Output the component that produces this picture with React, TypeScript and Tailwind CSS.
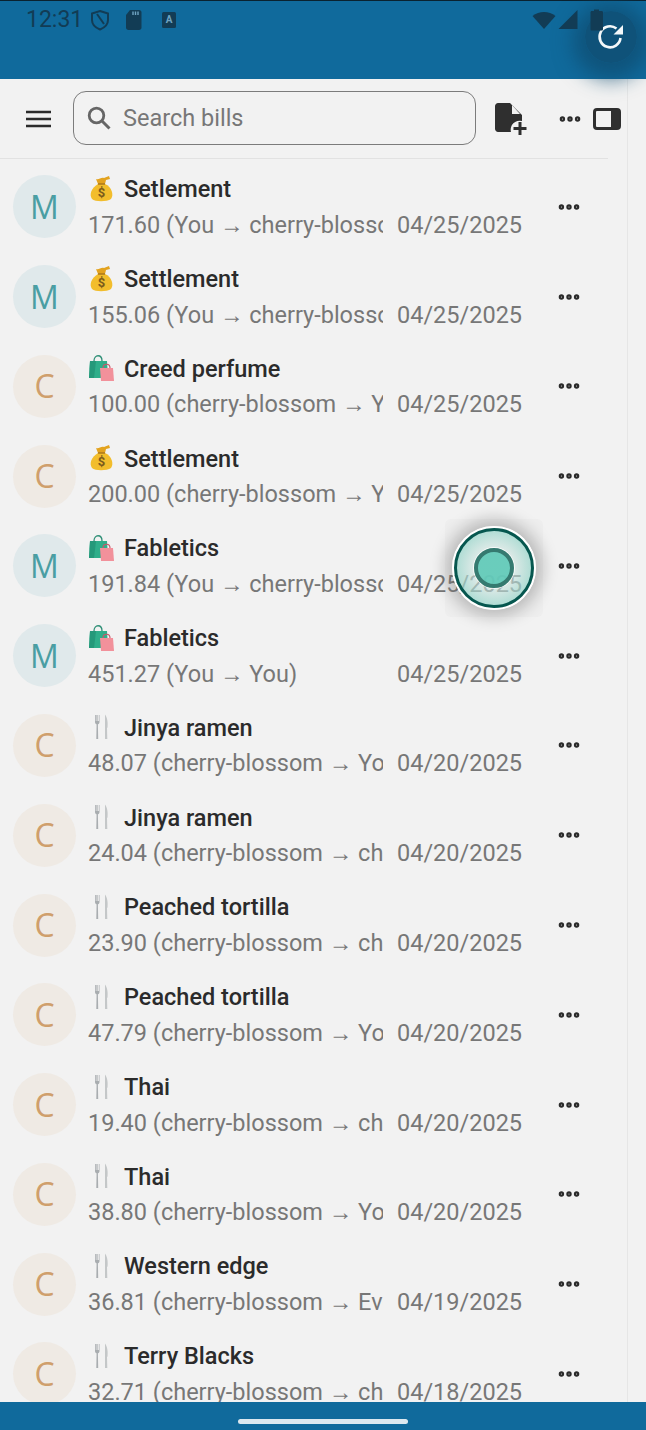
import { Ellipsis } from "lucide-react";

type Bill = { kind: "money" | "bag" | "food"; who: "M" | "C"; title: string; sub: string; date: string };

const bills: Bill[] = [
  { kind: "money", who: "M", title: "Setlement", sub: "171.60 (You → cherry-blossom)", date: "04/25/2025" },
  { kind: "money", who: "M", title: "Settlement", sub: "155.06 (You → cherry-blossom)", date: "04/25/2025" },
  { kind: "bag", who: "C", title: "Creed perfume", sub: "100.00 (cherry-blossom → You)", date: "04/25/2025" },
  { kind: "money", who: "C", title: "Settlement", sub: "200.00 (cherry-blossom → You)", date: "04/25/2025" },
  { kind: "bag", who: "M", title: "Fabletics", sub: "191.84 (You → cherry-blossom)", date: "04/25/2025" },
  { kind: "bag", who: "M", title: "Fabletics", sub: "451.27 (You → You)", date: "04/25/2025" },
  { kind: "food", who: "C", title: "Jinya ramen", sub: "48.07 (cherry-blossom → You)", date: "04/20/2025" },
  { kind: "food", who: "C", title: "Jinya ramen", sub: "24.04 (cherry-blossom → cherry)", date: "04/20/2025" },
  { kind: "food", who: "C", title: "Peached tortilla", sub: "23.90 (cherry-blossom → cherry)", date: "04/20/2025" },
  { kind: "food", who: "C", title: "Peached tortilla", sub: "47.79 (cherry-blossom → You)", date: "04/20/2025" },
  { kind: "food", who: "C", title: "Thai", sub: "19.40 (cherry-blossom → cherry)", date: "04/20/2025" },
  { kind: "food", who: "C", title: "Thai", sub: "38.80 (cherry-blossom → You)", date: "04/20/2025" },
  { kind: "food", who: "C", title: "Western edge", sub: "36.81 (cherry-blossom → Everyone)", date: "04/19/2025" },
  { kind: "food", who: "C", title: "Terry Blacks", sub: "32.71 (cherry-blossom → cherry)", date: "04/18/2025" },
];

const KindIcon = ({ kind }: { kind: Bill["kind"] }) => {
  if (kind === "money") {
    return (
      <svg width="28" height="28" viewBox="0 0 28 28" className="shrink-0">
        <path d="M10 9 C3 13 1 20 4 24 C7 27 19 27 23 24 C26 20 24 12 17 9 Z" fill="#f2bd2c" />
        <path d="M10 9 L8 4 C11 5 13 2 16 3 L21 1 L22 4 L18 5 L17 9 Z" fill="#e3a31f" />
        <path d="M10 9 L17 9" stroke="#a8741a" strokeWidth="1.4" />
        <text x="13.5" y="22" textAnchor="middle" fontSize="13" fontWeight="700" fill="#7a5a1c" fontFamily="Roboto, sans-serif">$</text>
      </svg>
    );
  }
  if (kind === "bag") {
    return (
      <svg width="28" height="28" viewBox="0 0 28 28" className="shrink-0">
        <path d="M6 7 C6 0 14 0 14 7" fill="none" stroke="#2f8f76" strokeWidth="1.3" />
        <path d="M2 7 H19 L20 24 H1 Z" fill="#2fae8a" />
        <path d="M2 7 H8 L6 24 H1 Z" fill="#25997a" />
        <path d="M15 14 C15 9 22 9 22 14" fill="none" stroke="#c9576b" strokeWidth="1.2" />
        <path d="M12 14 H25 L26 27 H13 Z" fill="#f2919b" />
      </svg>
    );
  }
  return (
    <svg width="28" height="28" viewBox="0 0 28 28" className="shrink-0">
      <path d="M7 2 V9 C7 10.5 8 11 8.6 11.5 L8.3 26 H10.2 L9.9 11.5 C10.5 11 11.5 10.5 11.5 9 V2 H10.9 V8 H10.1 V2 H9.4 V8 H8.6 V2 H7.8 V8 H7.6 V2 Z" fill="#a9adb0" />
      <path d="M17 1.5 C19.5 4.5 20 10 19.5 14.5 L19 15 L19.3 26 H17 Z" fill="#c4c7c8" />
    </svg>
  );
};

const Row = ({ bill }: { bill: Bill }) => (
  <div className="h-[89.77px] shrink-0 flex items-center pl-[13px]">
    <div
      className={`size-[63px] shrink-0 rounded-full flex items-center justify-center text-[32px] font-['Open_Sans',sans-serif] ${
        bill.who === "M" ? "bg-[#e0e9eb] text-[#4a9ea3]" : "bg-[#efeae4] text-[#cf9f6c]"
      }`}
    >
      {bill.who}
    </div>
    <div className="ml-[12px] w-[295px] shrink-0 overflow-hidden">
      <div className="flex items-center gap-[8px] h-[30px]">
        <KindIcon kind={bill.kind} />
        <p className="mt-[2px] text-[23.5px] font-medium text-[#2b2b2b] whitespace-nowrap">{bill.title}</p>
      </div>
      <p className="mt-[6px] text-[23.5px] leading-[30px] text-[#777777] whitespace-nowrap">{bill.sub}</p>
    </div>
    <div className="ml-[14px] w-[126px] shrink-0 pt-[36px] text-[23.5px] leading-[30px] text-[#777777] whitespace-nowrap">{bill.date}</div>
    <Ellipsis size={26} strokeWidth={3} className="ml-[33px] text-[#2b2b2b] shrink-0" />
  </div>
);

export default function App() {
  return (
    <div className="relative w-[646px] h-[1430px] overflow-hidden flex flex-col bg-[#f2f2f2] font-['Roboto',sans-serif]">
      {/* status bar */}
      <div className="h-[79px] shrink-0 bg-[#106a9c] border-t border-[#0a2230] flex items-start justify-between pl-[26px] pr-[42px] pt-[5px] text-[#123c55]">
        <div className="flex items-center">
          <span className="text-[23px] leading-[28px]">12:31</span>
          <svg width="20" height="22" viewBox="0 0 20 22" className="ml-[7px]" fill="none" stroke="currentColor" strokeWidth="2">
            <path d="M10 2 L18 4.5 V11 C18 15 15 18.5 10 20.5 C5 18.5 2 15 2 11 V4.5 Z" />
            <path d="M7 5 L14 15" />
          </svg>
          <svg width="18" height="22" viewBox="0 0 18 22" className="ml-[15px]" fill="currentColor">
            <path d="M5 1 H14 C15.5 1 16.5 2 16.5 3.5 V18.5 C16.5 20 15.5 21 14 21 H3.5 C2 21 1 20 1 18.5 V6 Z" />
            <path d="M8 2.5 V6 M10.5 2.5 V6 M13 2.5 V6" stroke="#6fa4c2" strokeWidth="1.4" />
          </svg>
          <svg width="16" height="18" viewBox="0 0 16 18" className="ml-[18px]">
            <rect x="1" y="1" width="14" height="16" rx="1.5" fill="currentColor" />
            <text x="8" y="11.5" textAnchor="middle" fontSize="10" fontWeight="700" fill="#6fa4c2" fontFamily="Roboto, sans-serif">A</text>
          </svg>
        </div>
        <div className="relative z-10 flex items-center gap-[2px] pt-[3px]">
          <svg width="24" height="20" viewBox="0 0 24 20" fill="currentColor">
            <path d="M12 19 L0.5 6 C7 0.5 17 0.5 23.5 6 Z" />
          </svg>
          <svg width="20" height="20" viewBox="0 0 20 20" fill="currentColor">
            <path d="M19.5 0 V19 H0.5 Z" />
          </svg>
          <svg width="14" height="22" viewBox="0 0 14 22" fill="currentColor" className="ml-[10px]">
            <path d="M4 2 V0.5 H9 V2 H11.5 C12.5 2 13 2.5 13 3.5 V20 C13 21 12.5 21.5 11.5 21.5 H2 C1 21.5 0.5 21 0.5 20 V3.5 C0.5 2.5 1 2 2 2 Z" />
          </svg>
        </div>
      </div>

      {/* main */}
      <div className="flex-1 min-h-0 flex overflow-hidden">
        <div className="w-[628px] shrink-0 border-r border-[#e6e6e6] flex flex-col">
          <div className="mr-[19px] h-[80px] shrink-0 border-b border-[#e2e2e2] flex items-center pl-[26px]">
            <svg width="25" height="18" viewBox="0 0 25 18" className="shrink-0">
              <path d="M0 2 H25 M0 9 H25 M0 16 H25" stroke="#2b2b2b" strokeWidth="2.6" />
            </svg>
            <div className="ml-[22px] mb-[2px] w-[403px] h-[54px] shrink-0 rounded-[13px] border border-[#7c7c7c] flex items-center pl-[13px] gap-[12px]">
              <svg width="24" height="24" viewBox="0 0 24 24" className="shrink-0">
                <circle cx="9.5" cy="9.5" r="7.3" fill="none" stroke="#666666" strokeWidth="2.8" />
                <path d="M14.5 14.5 L22.5 22.5" stroke="#666666" strokeWidth="3" />
              </svg>
              <span className="mt-[2px] text-[23.5px] text-[#777777]">Search bills</span>
            </div>
            <svg width="34" height="34" viewBox="0 0 34 34" className="ml-[18px] shrink-0">
              <path d="M4 1 H16 L28 13 V19 A9 9 0 0 0 17 30 H4 C2.5 30 1 28.5 1 27 V4 C1 2.5 2.5 1 4 1 Z" fill="#2f2f2f" />
              <path d="M18 3 L26 12 H18 Z" fill="#f2f2f2" />
              <path d="M26 20 V33 M19.5 26.5 H32.5" stroke="#2f2f2f" strokeWidth="3" />
            </svg>
            <Ellipsis size={26} strokeWidth={3} className="ml-[29px] text-[#2b2b2b] shrink-0" />
            <svg width="28" height="22" viewBox="0 0 28 22" className="ml-[10px] shrink-0">
              <rect x="1.5" y="1.5" width="25" height="19" rx="2.5" fill="none" stroke="#2f2f2f" strokeWidth="3" />
              <rect x="18" y="1.5" width="8.5" height="19" fill="#2f2f2f" />
            </svg>
          </div>
          <div className="flex-1 min-h-0 overflow-hidden flex flex-col pt-[3px]">
            {bills.map((bill, i) => (
              <Row key={i} bill={bill} />
            ))}
          </div>
        </div>
      </div>

      {/* nav bar */}
      <div className="h-[28px] shrink-0 bg-[#106a9c] flex items-center justify-center">
        <div className="w-[170px] h-[5px] mt-[10px] rounded-full bg-[#dce8ef]" />
      </div>

      {/* floating refresh button */}
      <div className="absolute right-[9px] top-[11px] size-[52px] rounded-full flex items-center justify-center bg-[#0f4c70]/80 shadow-[0_4px_20px_12px_rgba(15,76,112,0.75)]">
        <svg width="28" height="28" viewBox="0 0 28 28" fill="none">
          <path d="M23.5 15 A10.5 10.5 0 1 1 19.5 5.5" stroke="#f4f8fa" strokeWidth="2.6" />
          <path d="M26 2 V11.5 H16.5 Z" fill="#f4f8fa" />
        </svg>
      </div>

      {/* floating record bubble */}
      <div className="absolute left-[445px] top-[519px] size-[98px] flex items-center justify-center bg-[#d4d4d4]/15 rounded-[6px]">
        <div className="size-[84px] rounded-full border-[2px] border-white shadow-[0_0_16px_7px_rgba(0,0,0,0.22)]">
          <div className="size-full rounded-full border-[3px] border-[#06574f] flex items-center justify-center bg-[radial-gradient(circle,rgba(225,235,232,0.45)_30%,rgba(120,205,190,0.85)_100%)]">
            <div className="size-[42px] rounded-full border border-white/80 flex items-center justify-center">
              <div className="size-[40px] rounded-full border-[4px] border-[#357a70] bg-[#5cc9b7]/90" />
            </div>
          </div>
        </div>
      </div>
    </div>
  );
}
